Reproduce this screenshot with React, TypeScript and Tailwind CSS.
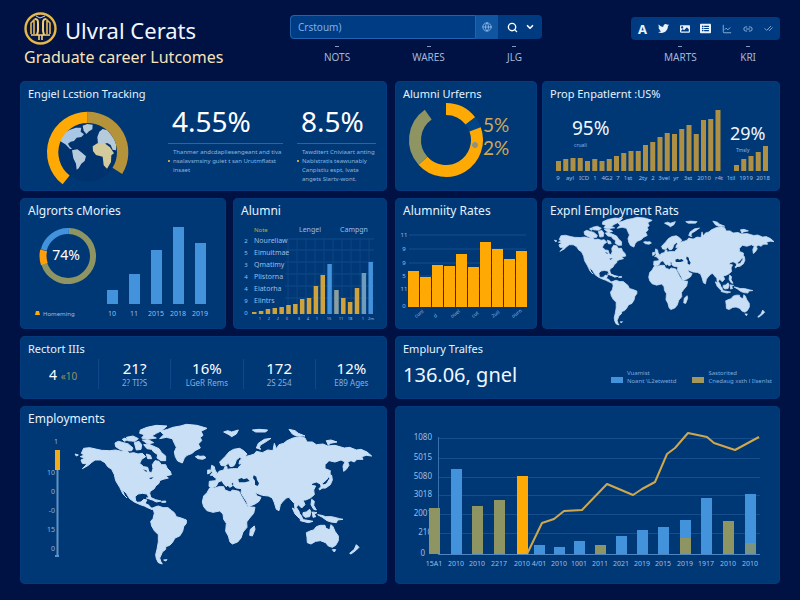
import type { ReactNode } from "react";
import { FaTwitter, FaImage, FaListAlt } from "react-icons/fa";
import { ChevronDown, Search, Globe, LineChart, Link2, CheckCheck } from "lucide-react";

const GOLD = "#ffaa04";
const OLIVE = "#8f9463";
const BLUE = "#4292dc";

function Card({ title, size = "text-xs", children }: { title?: string; size?: string; children: ReactNode }) {
  return (
    <section className="min-w-0 overflow-hidden rounded-[5px] bg-[#003876] shadow-[inset_0_0_0_1px_#053a7c]">
      {title && <h2 className={`px-2 pt-[5px] leading-4 text-[#e6f2ff] ${size}`}>{title}</h2>}
      {children}
    </section>
  );
}

function polar(cx: number, cy: number, r: number, deg: number) {
  const a = ((deg - 90) * Math.PI) / 180;
  return `${cx + r * Math.cos(a)} ${cy + r * Math.sin(a)}`;
}

function Arc({ cx, cy, r, from, to, color, width }: { cx: number; cy: number; r: number; from: number; to: number; color: string; width: number }) {
  const large = to - from > 180 ? 1 : 0;
  return (
    <path
      d={`M${polar(cx, cy, r, from)} A${r} ${r} 0 ${large} 1 ${polar(cx, cy, r, to)}`}
      fill="none"
      stroke={color}
      strokeWidth={width}
    />
  );
}

const LAND = [
  "M196 160l10 3-6 3zM215 158L222 143 240 141 262 146 276 149 300 150 318 148 335 152 350 150 360 158 372 156 385 160 398 158 408 168 396 176 390 188 402 198 414 200 418 214 426 216 430 204 428 192 436 180 448 182 455 192 468 192 472 202 482 212 485 222 468 226 476 232 460 236 450 240 448 248 438 256 434 264 422 272 420 278 425 296 418 292 412 280 398 278 385 280 376 288 378 300 384 305 394 304 402 296 412 298 406 308 418 314 424 322 434 322 428 327 416 322 404 316 392 312 374 304 360 294 350 278 338 266 344 284 352 292 340 280 330 260 318 240 314 222 306 206 294 198 286 186 272 178 256 178 245 186 236 194 218 204 232 190 218 188 214 178 226 172 212 168 224 163z",
  "M316 127L326 122 342 126 356 130 370 142 366 150 345 151 330 146 318 138zM350 110l20-4 16 8-10 8-22-2zM338 116l8-4 6 6-8 4zM374 126l14-4 8 10-2 14-14 2zM398 118l20 0 14 8-18 4zM392 88L412 80 440 74 472 76 456 90 440 98 426 106 440 112 412 116 396 112 404 102 390 98zM402 132l14-2 14 6 18 8 8 12 12 10 0 14-14 0-12-8 2-10-12-8-6-8-14-2zM410 160l12 4 4 10-12 0z",
  "M452 92L474 86 490 80 512 76 530 71 562 74 592 83 574 92 580 104 572 110 576 120 566 130 572 142 556 150 548 158 532 164 524 172 518 187 504 181 497 168 494 154 500 140 494 128 488 114 470 110 450 114 462 102z",
  "M557 168l8-3 6 2 12-1 6 5-10 5-14-2zM410 292l14-1 14 6 16 4-14 3-12-6zM456 302l12-1 0 4-12 0zM462 478l10-1-4 4z",
  "M430 322L438 318 446 316 460 321 475 321 486 330 494 336 500 348 514 352 530 358 530 368 522 378 519 392 510 406 496 412 488 426 480 434 468 438 468 446 458 454 454 464 450 472 454 484 458 490 446 486 440 474 438 462 442 446 446 424 446 402 434 390 426 376 423 362 430 354 434 338z",
  "M600 262L614 262 628 258 642 258 646 268 662 274 668 268 688 272 694 284 702 298 714 318 736 320 732 338 720 352 711 364 712 380 700 394 694 412 684 424 668 430 661 424 656 406 648 392 650 368 642 356 640 340 630 331 610 335 592 330 582 318 578 304 582 286 592 276zM734 376l2 10-8 20-8-2 2-18z",
  "M598 257L599 242 618 240 620 234 610 226 622 220 628 212 642 208 646 198 652 198 652 206 668 204 684 204 690 196 700 188 688 190 690 180 696 174 690 170 680 178 676 190 672 196 662 198 656 188 646 196 634 194 630 184 646 168 658 154 672 146 690 143 702 150 712 160 706 168 722 164 734 160 740 152 758 156 774 148 790 150 794 128 800 144 808 132 822 128 832 120 850 112 872 108 886 112 892 124 908 124 920 132 940 130 954 136 976 134 1004 142 1020 140 1040 148 1054 146 1072 154 1086 166 1070 164 1056 168 1060 176 1042 176 1034 184 1024 180 1014 184 1018 194 1010 206 1002 212 1000 196 1006 184 994 178 976 184 958 180 946 192 946 204 962 210 960 224 950 238 938 248 944 262 936 262 932 250 920 244 908 248 904 254 918 256 912 268 914 282 902 292 888 298 880 298 886 312 876 322 866 312 860 320 868 332 872 348 862 340 856 326 854 308 846 300 838 290 830 292 818 304 812 312 808 330 800 326 794 306 788 292 776 286 758 284 742 278 736 274 742 286 754 290 748 302 736 310 716 318 710 302 702 290 694 276 696 264 680 262 672 256 672 246 664 246 668 256 660 260 650 248 642 240 656 252 650 258 644 252 636 240 626 244 620 256 606 262z",
  "M606 194l8 4 2 10 6 10-6 6-14 0 6-8-4-8zM594 208l8 0 0 8-8 4zM740 142l6-14 18-12 20-3-18 12-14 8-4 12 6 0zM642 94l12-4 12 4 20-6-6 12-14 8-8-6zM728 88l20-2 26 2-6 6-30 0zM838 86l18 4 10 8 20 8-26 0-12-6zM950 120l14-2 18 6-20 4-6 6z",
  "M958 210l4 12-4-2zM956 222l10 2 2 14-6 14-14 10-6 0 4-6-16 12-2-4 10-10 12-4 10-16zM848 322l10 6 16 16 6 12-10-2-14-14zM872 356l16 2 22 4-14 4-24-6zM880 336l10-2 10-8 4 8-4 14-14 2-6-6zM908 334l14 2-8 4 4 8-8 2zM906 296l8 6-2 12 8 14-8-2-8-14zM924 342l12 2 12 4 18 0 24 6 10 2-16 2-4 8-16-2-12-4-14-10z",
  "M890 396L904 390 912 388 920 378 932 374 946 374 948 382 960 388 964 372 970 378 976 392 986 406 986 420 978 434 968 440 956 436 948 426 932 420 918 422 904 430 893 426 892 410zM968 447l10 0-4 7zM1040 432l8 8-8 8-16 12-4-2 14-12z",
];

function WorldMap({ label, className }: { label: string; className: string }) {
  return (
    <svg viewBox="190 70 900 420" preserveAspectRatio="none" role="img" aria-label={label} className={`block overflow-visible ${className}`}>
      <path d={LAND.join("")} fill="#c8dff6" stroke="#c8dff6" strokeWidth="3" strokeLinejoin="round" />
      <path
        d="M686 236l10-4 6 4 10-3 8 8-14 4-18 0zM732 224l8 4 2 10 6 10-4 8-8-4 0-12-6-8zM400 206l12 4-2 4zM418 232l14-2-8 6z"
        fill="#003876"
      />
    </svg>
  );
}

function Bars({ values, x, step, width, base, color }: { values: number[]; x: number; step: number; width: number; base: number; color: string | string[] }) {
  return (
    <>
      {values.map((v, i) => (
        <rect key={i} x={x + i * step} y={base - v} width={width} height={v} fill={Array.isArray(color) ? color[i] : color} />
      ))}
    </>
  );
}

function Labels({ items, y, className = "text-[7px]", anchor = "middle" }: { items: [number, string][]; y: number; className?: string; anchor?: "middle" | "start" | "end" }) {
  return (
    <>
      {items.map(([x, t], i) => (
        <text key={i} x={x} y={y} textAnchor={anchor} fill="#9dbde2" className={className}>
          {t}
        </text>
      ))}
    </>
  );
}

function Emblem() {
  return (
    <svg viewBox="0 0 33 33" aria-hidden="true" className="size-[33px] shrink-0">
      <circle cx="16.5" cy="16.5" r="15" fill="#07173f" stroke="#e5b74c" strokeWidth="2.4" />
      <path d="M7 22V11l3-3v14M26 22V11l-3-3v14" fill="none" stroke="#e5b74c" strokeWidth="1.6" />
      <path d="M11 7c3 0 3 2 3 5v7l-1 4M22 7c-3 0-3 2-3 5v7l1 4" fill="none" stroke="#f0cd7c" strokeWidth="2" />
      <path d="M7 23h19M15 23v5M18 23v5" fill="none" stroke="#f2cf78" strokeWidth="1.6" />
      <path d="M12 4l4 2 5-2" fill="none" stroke="#c9d3e8" strokeWidth="1" />
    </svg>
  );
}

function NavLink({ children }: { children: ReactNode }) {
  return (
    <a href="#" className="flex flex-col items-center gap-1 text-[10px] leading-3 text-[#a3b8d8]">
      <span className="h-px w-1 bg-[#7f9cc6]" />
      {children}
    </a>
  );
}

function Header() {
  return (
    <header className="flex items-start pb-3 pt-3">
      <div className="w-[270px] shrink-0 pl-1">
        <div className="flex items-center gap-2">
          <Emblem />
          <h1 className="pt-0.5 text-[22px] leading-7 text-[#f1f7ff]">Ulvral Cerats</h1>
        </div>
        <p className="text-base leading-6 text-[#f6e3b9]">Graduate career Lutcomes</p>
      </div>

      <div className="w-[252px] shrink-0 pt-[3px]">
        <form className="flex h-6 rounded bg-[#003a80]" onSubmit={(e) => e.preventDefault()}>
          <label htmlFor="search" className="sr-only">
            Search
          </label>
          <input
            id="search"
            placeholder="Crstoum)"
            className="h-6 min-w-0 flex-1 rounded-l border border-[#1f64ae] bg-[#003c84] px-[7px] text-[10px] leading-5 text-[#cfe3fb] outline-none placeholder:text-[#7db0e6]"
          />
          <button type="button" aria-label="Region" className="grid w-[22px] place-items-center bg-[#0f559f] text-[#8fbdee]">
            <Globe size={10} />
          </button>
          <button type="submit" aria-label="Search" className="grid w-6 place-items-center pl-1 text-white">
            <Search size={11} strokeWidth={3} />
          </button>
          <button type="button" aria-label="More" className="grid w-5 place-items-center pr-1 text-white">
            <ChevronDown size={10} strokeWidth={4} />
          </button>
        </form>
        <nav aria-label="Sections" className="flex justify-between pl-[34px] pr-5 pt-[7px]">
          <NavLink>NOTS</NavLink>
          <NavLink>WARES</NavLink>
          <NavLink>JLG</NavLink>
        </nav>
      </div>

      <div className="ml-auto w-[149px] pt-[5px]">
        <div className="flex h-[23px] items-center justify-between rounded bg-[#003a80] px-[7px] text-[#e8f3ff]">
          <button type="button" className="text-[13px] font-bold leading-4">A</button>
          <button type="button" aria-label="Twitter"><FaTwitter size={11} /></button>
          <button type="button" aria-label="Image"><FaImage size={10} /></button>
          <button type="button" aria-label="List"><FaListAlt size={11} /></button>
          <button type="button" aria-label="Trend" className="text-[#9dc0e8]"><LineChart size={10} /></button>
          <button type="button" aria-label="Link" className="text-[#9dc0e8]"><Link2 size={10} /></button>
          <button type="button" aria-label="Done" className="text-[#9dc0e8]"><CheckCheck size={9} /></button>
        </div>
        <nav aria-label="Reports" className="flex justify-between pl-[33px] pr-6 pt-1.5">
          <NavLink>MARTS</NavLink>
          <NavLink>KRI</NavLink>
        </nav>
      </div>
    </header>
  );
}

function Stat({ value, lines, className }: { value: string; lines: string[]; className: string }) {
  return (
    <div className={`min-w-0 ${className}`}>
      <p className="border-b border-[#2b629f] pb-1.5 pl-1 text-[28px] leading-8 text-white">{value}</p>
      <div className="relative pl-[5px] pt-1 text-[6px] leading-[9px] text-[#8fb4de]">
        <span className="absolute left-0 top-4 size-0.5 bg-[#c9a04a]" />
        {lines.map((l) => (
          <p key={l} className="whitespace-nowrap">{l}</p>
        ))}
      </div>
    </div>
  );
}

function LocationCard() {
  return (
    <Card title="Engiel Lcstion Tracking" size="text-[11px]">
      <div className="flex items-start pb-1 pl-[25px] pr-[11px]">
        <svg viewBox="105 105 255 220" role="img" aria-label="Location gauge" className="mt-2 w-[85px] shrink-0 overflow-visible">
          <circle cx="233" cy="232" r="88" fill="#00336d" />
          <path
            d="M150 192l6-12 10-8 14-8 18-6 16 0-2 12 10 8-8 8-14 2-8 10-10 2-8 6 4 8 8 8-6 0-14-14-10-6-6-4z"
            fill="#a9c6e4"
          />
          <path d="M218 152l14-5 16 2-1 14-10 6-8 8-8-10zM262 186l6-16 10-8 14 4 12 14 8 12 6 16 0 18-10-2-6-14-10-6-12 4-16-2zM186 226l16-3 12 9 14 12-4 14-10 8-8 14-6 4-2-18-8-16z" fill="#b5cbdc" />
          <path d="M248 214l14-9 22 0 16 12 12 18-8 6-1 20-12 20-10-10-3-26-20-5-9-12z" fill="#d3cb9c" />
          <Arc cx={233} cy={232} r={105} from={218} to={360} color={GOLD} width={34} />
          <Arc cx={233} cy={232} r={105} from={0} to={122} color="#b5933b" width={34} />
        </svg>
        <Stat className="ml-[38px] mt-[3px] flex-[115]" value="4.55%" lines={["Thanmer andcdapliesengeant and tiva", "nsalavsmsiny guiet t san Urutmflatst", "insaet"]} />
        <Stat className="ml-[14px] mt-[3px] flex-[79]" value="8.5%" lines={["Tawditert Cniviaart anting", "Nabistratis teawunably", "Canpistiu espt, lvata", "angets Slartv-wont."]} />
      </div>
    </Card>
  );
}

function AlumniDonutCard() {
  return (
    <Card title="Alumni Urferns" size="text-[11px]">
      <svg viewBox="0 0 142 89" role="img" aria-label="Alumni split" className="block w-full overflow-visible">
        <Arc cx={51} cy={38} r={31} from={0} to={52} color={GOLD} width={12} />
        <Arc cx={51} cy={38} r={31} from={52} to={70} color="#004488" width={12} />
        <Arc cx={51} cy={38} r={31} from={70} to={228} color={GOLD} width={12} />
        <Arc cx={51} cy={38} r={31} from={228} to={325} color={OLIVE} width={12} />
        <circle cx="80" cy="43" r="2.5" fill="#a58f52" stroke="#6f95b5" strokeWidth="1" />
        <g fill="#cda955" className="font-['Lato','Noto_Sans',sans-serif] text-[19px]">
          <text x="88" y="30">5%</text>
          <text x="88" y="53">2%</text>
        </g>
      </svg>
    </Card>
  );
}

function PropCard() {
  return (
    <Card title="Prop Enpatlernt :US%" size="text-[11px]">
      <svg viewBox="0 0 238 89" role="img" aria-label="Yearly share" className="block w-full">
        <Bars values={[10, 12, 13, 13, 10, 12, 10, 12, 15, 18, 20, 20, 26, 29, 34, 38, 37, 42, 46, 37, 51, 52, 61]} x={14} step={7.25} width={5} base={69} color="#ad9044" />
        <Bars values={[6, 12, 15, 19, 25]} x={192} step={7.25} width={5} base={69} color="#ad9044" />
        <text x="30" y="33" fill="#eef6ff" className="text-[19px]">95%</text>
        <text x="188" y="38" fill="#eef6ff" className="text-[18px]">29%</text>
        <text x="32" y="45" fill="#8fb4de" className="text-[5px]">cruali</text>
        <text x="194" y="50" fill="#8fb4de" className="text-[5px]">Tmsly</text>
        <Labels
          y={78}
          className="text-[6px]"
          items={[[16, "9"], [28, "ayl"], [42, "ICD"], [53, "1"], [65, "4G2"], [76, "7"], [86, "1st"], [101, "2ty"], [111, "2"], [122, "3vel"], [134, "yr"], [146, "3st"], [162, "2010"], [177, "r4t"], [189, "1til"], [204, "1919"], [221, "2018"]]}
        />
      </svg>
    </Card>
  );
}

function CategoriesCard() {
  return (
    <Card title="Algrorts cMories">
      <svg viewBox="0 0 206 110" role="img" aria-label="Categories by year" className="block w-full">
        <Arc cx={48} cy={37} r={25} from={2} to={252} color={OLIVE} width={6} />
        <Arc cx={48} cy={37} r={25} from={284} to={362} color={BLUE} width={6} />
        <Arc cx={48} cy={37} r={25} from={251} to={283} color="#ff9d0a" width={7} />
        <text x="46" y="41" textAnchor="middle" fill="#ffffff" className="text-[14px]">74%</text>
        <Bars values={[14, 30, 54, 77, 61]} x={87} step={22} width={11} base={85} color={BLUE} />
        <Labels y={97} className="text-[7px]" items={[[92, "10"], [114, "11"], [136, "2015"], [158, "2018"], [180, "2019"]]} />
        <path d="M15 96l1-4h3l1 4z" fill={GOLD} />
        <Labels y={97} className="text-[6px]" anchor="start" items={[[23, "Homeming"]]} />
      </svg>
    </Card>
  );
}

function AlumniCard() {
  const rows = ["Noureliaw", "Eimuitmae", "Qmatimy", "Plistorna", "Eiatorha", "Elintrs"];
  const ticks = ["2", "5", "3", "4", "4", "9"];
  const g = "#d0a23c";
  const m = "#8aa0a0";
  return (
    <Card title="Alumni">
      <svg viewBox="0 0 154 110" role="img" aria-label="Alumni breakdown" className="block w-full">
        {[20, 31, 43, 55, 67, 79].map((y) => (
          <path key={y} d={`M52 ${y}H141`} stroke="#114a8a" strokeWidth="1" />
        ))}
        {[55, 64, 73, 82, 91, 100, 109, 118, 127, 136].map((x) => (
          <path key={x} d={`M${x} 19V95`} stroke="#0c4585" strokeWidth="1" />
        ))}
        <text x="21" y="13" fill="#d0a23c" className="text-[6px]">Note</text>
        <Labels y={13} className="text-[7px]" items={[[77, "Lengel"], [121, "Campgn"]]} />
        {rows.map((r, i) => (
          <g key={r}>
            <Labels y={24 + i * 12} className="text-[6px]" items={[[13, ticks[i]]]} />
            <Labels y={24 + i * 12} anchor="start" className="text-[7px]" items={[[21, r]]} />
          </g>
        ))}
        <Labels y={96} className="text-[6px]" items={[[13, "0"]]} />
        <Bars
          values={[2, 3, 5, 6, 7, 9, 10, 15, 16, 28, 39, 50, 24, 16, 12, 26, 41, 52]}
          x={19}
          step={6.85}
          width={4.5}
          base={95}
          color={[g, g, g, g, g, g, g, g, g, g, g, BLUE, m, g, g, g, "#6f9cba", BLUE]}
        />
        <Labels y={101} className="text-[4px]" items={[[27, "1"], [36, "2"], [45, "2"], [54, "0"], [66, "3"], [75, "4"], [84, "1"], [96, "15"], [108, "11"], [117, "18"], [130, "1"], [138, "2m"]]} />
      </svg>
    </Card>
  );
}

function RatesCard() {
  const ticks: [number, string][] = [[17, "11"], [31, "9"], [45, "9"], [58, "5"], [71, "11"], [88, "0"]];
  const names: [number, string][] = [[21, "cunl"], [40, "d"], [57, "ouel"], [78, "cut"], [98, "2uil"], [118, "ourn"]];
  return (
    <Card title="Alumniity Rates">
      <svg viewBox="0 0 142 110" role="img" aria-label="Alumni rates" className="block w-full">
        {ticks.map(([y, t]) => (
          <g key={y}>
            <path d={`M14 ${y - 1}H131`} stroke="#154d8d" strokeWidth="1" />
            <Labels y={y + 1} className="text-[6px]" items={[[9, t]]} />
          </g>
        ))}
        <Bars values={[36, 30, 42, 41, 53, 40, 65, 58, 48, 56]} x={13} step={12} width={11} base={88} color={GOLD} />
        {names.map(([x, t]) => (
          <text key={x} x={x} y="99" fill="#8fb4de" className="text-[5px]" transform={`rotate(-35 ${x} 99)`}>{t}</text>
        ))}
      </svg>
    </Card>
  );
}

function ReportCard() {
  const stats = [["21?", "2? TI?S"], ["16%", "LGeR Rems"], ["172", "2S 254"], ["12%", "E89 Ages"]];
  return (
    <Card title="Rectort IIIs" size="text-[11px]">
      <div className="flex pb-2 pt-0.5">
        <p className="w-[78px] shrink-0 pl-[29px] pt-1.5 text-sm leading-5 text-white">
          4 <span className="text-[10px] text-[#8f9463]">«10</span>
        </p>
        {stats.map(([v, l]) => (
          <div key={v} className="flex-1 border-l border-[#0f488a] text-center">
            <p className="text-[15px] leading-[18px] text-white">{v}</p>
            <p className="whitespace-nowrap text-[8px] leading-3 text-[#86aede]">{l}</p>
          </div>
        ))}
      </div>
    </Card>
  );
}

function Legend({ swatch, lines }: { swatch: string; lines: string[] }) {
  return (
    <div className="flex items-end gap-1">
      <span className={`mb-0.5 h-1.5 w-3 ${swatch}`} />
      <div className="text-[6px] leading-2 text-[#7fa8da]">
        {lines.map((l) => (
          <p key={l} className="whitespace-nowrap">{l}</p>
        ))}
      </div>
    </div>
  );
}

function TotalsCard() {
  return (
    <Card title="Emplury Tralfes" size="text-[11px]">
      <div className="flex items-center justify-between pb-2.5 pl-2 pr-2">
        <p className="pt-1 text-xl leading-7 text-[#f1f7ff]">136.06, gnel</p>
        <div className="flex gap-4 pt-2">
          <Legend swatch="bg-[#4292dc]" lines={["Vuamist", "Noant \\L2etwettd"]} />
          <Legend swatch="bg-[#a3985a]" lines={["Sastorited", "Cnedaug xsth l Ilsenlst"]} />
        </div>
      </div>
    </Card>
  );
}

function EmploymentsCard() {
  const ticks: [number, string][] = [[5, "1"], [36, "10"], [55, "0"], [74, "-0"], [93, "15"], [112, "0"]];
  return (
    <Card title="Employments">
      <div className="flex items-start pl-[25px] pr-[14px]">
        <svg viewBox="0 0 16 124" role="img" aria-label="Scale" className="mt-3 w-4 shrink-0 overflow-visible">
          <path d="M12.5 12V117M10 117h4" stroke="#5f92c9" strokeWidth="2" fill="none" />
          <rect x="10" y="11" width="5" height="20" fill="#f0ac1c" />
          {ticks.map(([y, t]) => (
            <text key={y} x={y === 5 ? 13 : 10} y={y} textAnchor="end" fill="#8fb4de" className="text-[7px]">{t}</text>
          ))}
        </svg>
        <WorldMap label="Employment locations" className="-mt-[3px] ml-[12px] aspect-[300/140] min-w-0 flex-1" />
      </div>
    </Card>
  );
}

function TrendCard() {
  const grid: [number, string][] = [[32, "1080"], [52, "5015"], [71, "5080"], [89, "3018"], [108, "2001"], [127, "210"], [148, "0"]];
  const bars: [number, number, string][] = [
    [34, 102, OLIVE], [56, 63, BLUE], [77, 100, OLIVE], [99, 94, OLIVE], [122, 70, GOLD], [139, 139, BLUE], [159, 141, BLUE], [179, 135, BLUE],
    [200, 139, OLIVE], [221, 130, BLUE], [242, 124, BLUE], [263, 121, BLUE], [285, 114, BLUE], [306, 92, BLUE], [328, 115, OLIVE], [350, 88, BLUE],
  ];
  const years = ["15A1", "2010", "2010", "2217", "2010", "4/01", "2010", "1001", "2011", "2021", "2019", "2015", "2019", "1917", "2010", "2010"];
  return (
    <Card>
      <svg viewBox="0 0 385 178" role="img" aria-label="Outcome trend" className="block w-full">
        {grid.map(([y, t]) => (
          <g key={y}>
            <path d={`M43 ${y + 0.5}H365`} stroke={y === 148 ? "#4f86c2" : "#154d8d"} strokeWidth="1" />
            <text x={y === 148 ? 30 : 37} y={y + 2} textAnchor="end" fill="#9dbde2" className="text-[8px]">{t}</text>
          </g>
        ))}
        <path d="M43.500 31V148" stroke="#3a70ae" strokeWidth="1" />
        {bars.map(([x, y, c]) => (
          <rect key={x} x={x} y={y} width="11" height={148 - y} fill={c} />
        ))}
        <rect x="285" y="132" width="11" height="16" fill={OLIVE} />
        <rect x="350" y="137" width="11" height="11" fill="#7b9480" />
        <path
          d="M132 148L147 117 159 113 169 105 187 104 212 78 238 89 247 83 260 76 272 48 280 42 293 27 312 31 319 37 340 44 364 31"
          fill="none"
          stroke="#cfa84e"
          strokeWidth="2"
          strokeLinejoin="round"
        />
        <Labels y={160} items={bars.map(([x], i) => [x + 5, years[i]] as [number, string])} />
      </svg>
    </Card>
  );
}

export default function App() {
  return (
    <main className="min-h-screen bg-[#001243] px-5 pb-4 font-['Noto_Sans','Open_Sans',sans-serif]">
      <Header />
      <div className="grid grid-cols-[367fr_385fr] gap-x-2 gap-y-[7px]">
        <LocationCard />
        <div className="grid grid-cols-[142fr_238fr] gap-[5px]">
          <AlumniDonutCard />
          <PropCard />
        </div>
        <div className="grid grid-cols-[206fr_154fr] gap-[7px]">
          <CategoriesCard />
          <AlumniCard />
        </div>
        <div className="grid grid-cols-[142fr_238fr] gap-[5px]">
          <RatesCard />
          <Card title="Expnl Employnent Rats">
            <WorldMap label="Employment rates" className="-mt-0.5 ml-[11px] mr-[5px] aspect-[222/108]" />
          </Card>
        </div>
        <ReportCard />
        <TotalsCard />
        <EmploymentsCard />
        <TrendCard />
      </div>
    </main>
  );
}
